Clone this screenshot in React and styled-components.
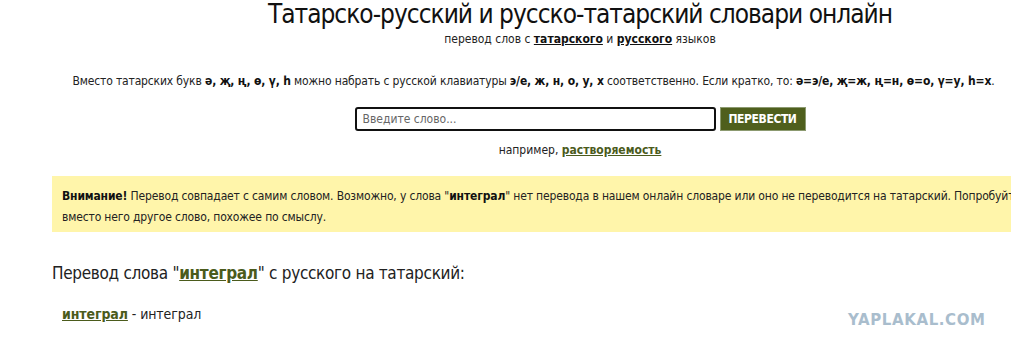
import React from "react";
import styled, { createGlobalStyle } from "styled-components";

const Global = createGlobalStyle`
  html, body { margin: 0; padding: 0; background: #fff; overflow: hidden; }
  body { font-family: "DejaVu Sans Condensed", "DejaVu Sans", sans-serif; color: #222; }
`;

const Page = styled.div`
  position: relative;
  width: 1011px;
  height: 350px;
  overflow: hidden;
`;

const Container = styled.div`
  margin-left: 52px;
  width: 1056px;
  display: flex;
  flex-direction: column;
`;

const Title = styled.h1`
  margin: -1px 0 0;
  font-weight: normal;
  font-size: 26px;
  letter-spacing: -1px;
  line-height: 30px;
  color: #111;
  text-align: center;
`;

const Sub = styled.div`
  margin-top: 3px;
  font-size: 12px;
  line-height: 14px;
  text-align: center;
  color: #222;
`;

const DarkLink = styled.a`
  color: #111;
  font-weight: bold;
  text-decoration: underline;
`;

const Hint = styled.p`
  margin: 28px 0 0;
  width: 963px;
  font-size: 12px;
  letter-spacing: -0.15px;
  line-height: 14px;
  text-align: center;
  white-space: nowrap;
  color: #222;
  b { color: #111; }
`;

const Form = styled.form`
  margin-top: 19px;
  display: flex;
  justify-content: center;
  gap: 4px;
`;

const Input = styled.input`
  box-sizing: border-box;
  width: 361px;
  height: 24px;
  border: 2px solid #111;
  border-radius: 3px;
  padding: 0 6px;
  font-family: inherit;
  font-size: 12px;
  color: #222;
  outline: none;
  &::placeholder { color: #666; }
`;

const Button = styled.button`
  box-sizing: border-box;
  height: 24px;
  width: 86px;
  background: #4f5f1d;
  border: 1px solid #8c9a70;
  color: #fff;
  font-family: inherit;
  font-weight: bold;
  font-size: 12px;
  letter-spacing: -0.4px;
  padding: 0;
`;

const Example = styled.div`
  margin-top: 12px;
  font-size: 12px;
  line-height: 14px;
  text-align: center;
  color: #222;
`;

const GreenLink = styled.a`
  color: #4b5b1c;
  font-weight: bold;
  text-decoration: underline;
`;

const Warning = styled.div`
  margin-top: 19px;
  background: #fff5aa;
  padding: 10px 24px 4px 10px;
  font-size: 12px;
  letter-spacing: -0.15px;
  line-height: 21px;
  color: #222;
  b { color: #111; }
`;

const Heading = styled.h2`
  margin: 31px 0 0;
  font-weight: normal;
  font-size: 17px;
  letter-spacing: -0.3px;
  line-height: 20px;
  color: #222;
`;

const Result = styled.div`
  margin: 23px 0 0 10px;
  font-size: 14px;
  letter-spacing: -0.1px;
  line-height: 16px;
  color: #222;
`;

const Watermark = styled.div`
  position: absolute;
  left: 848px;
  top: 311px;
  font-family: "DejaVu Sans", sans-serif;
  font-weight: 900;
  font-size: 15px;
  letter-spacing: 0.6px;
  color: #a9bdcd;
`;

export default function App() {
  return (
    <Page>
      <Global />
      <Container>
        <Title>Татарско-русский и русско-татарский словари онлайн</Title>
        <Sub>
          перевод слов с <DarkLink href="#">татарского</DarkLink> и{" "}
          <DarkLink href="#">русского</DarkLink> языков
        </Sub>
        <Hint>
          Вместо татарских букв <b>ә, җ, ң, ө, ү, һ</b> можно набрать с русской клавиатуры{" "}
          <b>э/е, ж, н, о, у, х</b> соответственно. Если кратко, то:{" "}
          <b>ә=э/е, җ=ж, ң=н, ө=о, ү=у, һ=х</b>.
        </Hint>
        <Form onSubmit={(e) => e.preventDefault()}>
          <Input placeholder="Введите слово..." />
          <Button type="submit">ПЕРЕВЕСТИ</Button>
        </Form>
        <Example>
          например, <GreenLink href="#">растворяемость</GreenLink>
        </Example>
        <Warning>
          <b>Внимание!</b> Перевод совпадает с самим словом. Возможно, у слова "<b>интеграл</b>" нет
          перевода в нашем онлайн словаре или оно не переводится на татарский. Попробуйте ввести
          вместо него другое слово, похожее по смыслу.
        </Warning>
        <Heading>
          Перевод слова "<GreenLink href="#">интеграл</GreenLink>" с русского на татарский:
        </Heading>
        <Result>
          <GreenLink href="#">интеграл</GreenLink> - интеграл
        </Result>
      </Container>
      <Watermark>YAPLAKAL.COM</Watermark>
    </Page>
  );
}
